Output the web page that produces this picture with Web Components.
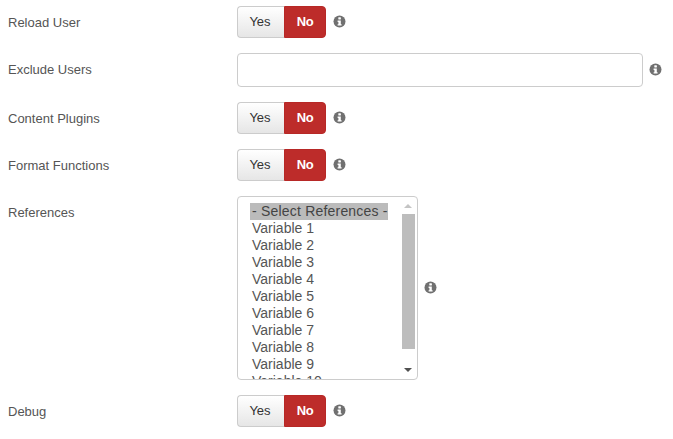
<!DOCTYPE html>
<html><head><meta charset="utf-8"><style>
html,body{margin:0;padding:0;background:#fff}
body{font:13px/18px "Liberation Sans",Arial,sans-serif;color:#555;width:673px;height:439px;overflow:hidden}
form-list{display:flex;flex-direction:column;gap:15px;padding:6px 0 0 8px}
</style></head><body>
<form-list>
<form-row label="Reload User"><yes-no></yes-no><info-icon></info-icon></form-row>
<form-row label="Exclude Users"><text-box></text-box><info-icon></info-icon></form-row>
<form-row label="Content Plugins"><yes-no></yes-no><info-icon></info-icon></form-row>
<form-row label="Format Functions"><yes-no></yes-no><info-icon></info-icon></form-row>
<form-row label="References"><list-box></list-box><info-icon></info-icon></form-row>
<form-row label="Debug"><yes-no></yes-no><info-icon></info-icon></form-row>
</form-list>
<script>
function def(name,html,init){customElements.define(name,class extends HTMLElement{connectedCallback(){if(this.shadowRoot)return;const r=this.attachShadow({mode:'open'});r.innerHTML=html;if(init)init(this,r);}});}
def('form-list','<style>:host{display:flex}</style><slot></slot>');
def('form-row',`<style>
:host{display:flex;align-items:flex-start}
.l{width:229px;flex:none;padding-top:8px;line-height:18px;color:#555}
.c{display:flex;align-items:center;gap:6px}
</style><div class="l"></div><div class="c"><slot></slot></div>`,(h,r)=>{r.querySelector('.l').textContent=h.getAttribute('label')});
def('yes-no',`<style>
:host{display:flex;width:89px;height:32px;margin-right:1px;font:13px/18px "Liberation Sans",Arial,sans-serif}
div{display:flex;align-items:center;justify-content:center;box-sizing:border-box;height:32px}
.y{width:47px;color:#333;border:1px solid #ccc;border-right:0;border-radius:4px 0 0 4px;background:linear-gradient(#fff,#e6e6e6);padding:0 2px 1px 0}
.n{width:42px;color:#fff;font-weight:bold;background:#bd2c2a;border:1px solid #b72826;border-radius:0 4px 4px 0;padding-bottom:1px;letter-spacing:-.3px}
</style><div class="y">Yes</div><div class="n">No</div>`);
def('text-box',`<style>
:host{display:block;width:406px;height:34px;box-sizing:border-box;border:1px solid #ccc;border-radius:4px;background:#fff}
</style>`);
def('info-icon',`<style>:host{display:block;width:13px;height:13px;margin-bottom:2px}svg{display:block}</style>
<svg width="13" height="13" viewBox="0 0 13 13"><circle cx="6.5" cy="6.5" r="6" fill="#707070"/><rect x="5.3" y="2.3" width="2.6" height="2.2" rx=".4" fill="#fff"/><path d="M4.6 5.5H7.8V9.2H8.6V10.6H4.6V9.2H5.4V6.9H4.6Z" fill="#fff"/></svg>`);
def('list-box',`<style>
:host{display:block;position:relative;width:181px;height:184px;box-sizing:border-box;border:1px solid #ccc;border-radius:4px;background:#fff;overflow:hidden;font:14px/17px "Liberation Sans",Arial,sans-serif;color:#555}
.opts{padding:6px 0 0 12px;height:177px;overflow:hidden}
.o{display:block;width:fit-content;padding:0 2px}
.o.s{background:#bbb;color:#444;padding:0 1px 0 2px;letter-spacing:.2px;width:138px;box-sizing:border-box;white-space:nowrap}
.sb{position:absolute;top:0;right:0;width:16px;height:182px}
.t{position:absolute;left:1px;top:17px;width:13px;height:135px;background:#bdbdbd}
.u,.d{position:absolute;left:3px;width:0;height:0;border-left:4px solid transparent;border-right:4px solid transparent}
.u{top:7px;border-bottom:4px solid #c4c4c4}
.d{top:171px;border-top:4px solid #505050}
</style><div class="opts"></div><div class="sb"><div class="u"></div><div class="t"></div><div class="d"></div></div>`,(h,r)=>{
const o=r.querySelector('.opts');
['- Select References -','Variable 1','Variable 2','Variable 3','Variable 4','Variable 5','Variable 6','Variable 7','Variable 8','Variable 9','Variable 10'].forEach((t,i)=>{const d=document.createElement('div');d.className='o'+(i?'':' s');d.textContent=t;o.appendChild(d)});
});
</script>
</body></html>
